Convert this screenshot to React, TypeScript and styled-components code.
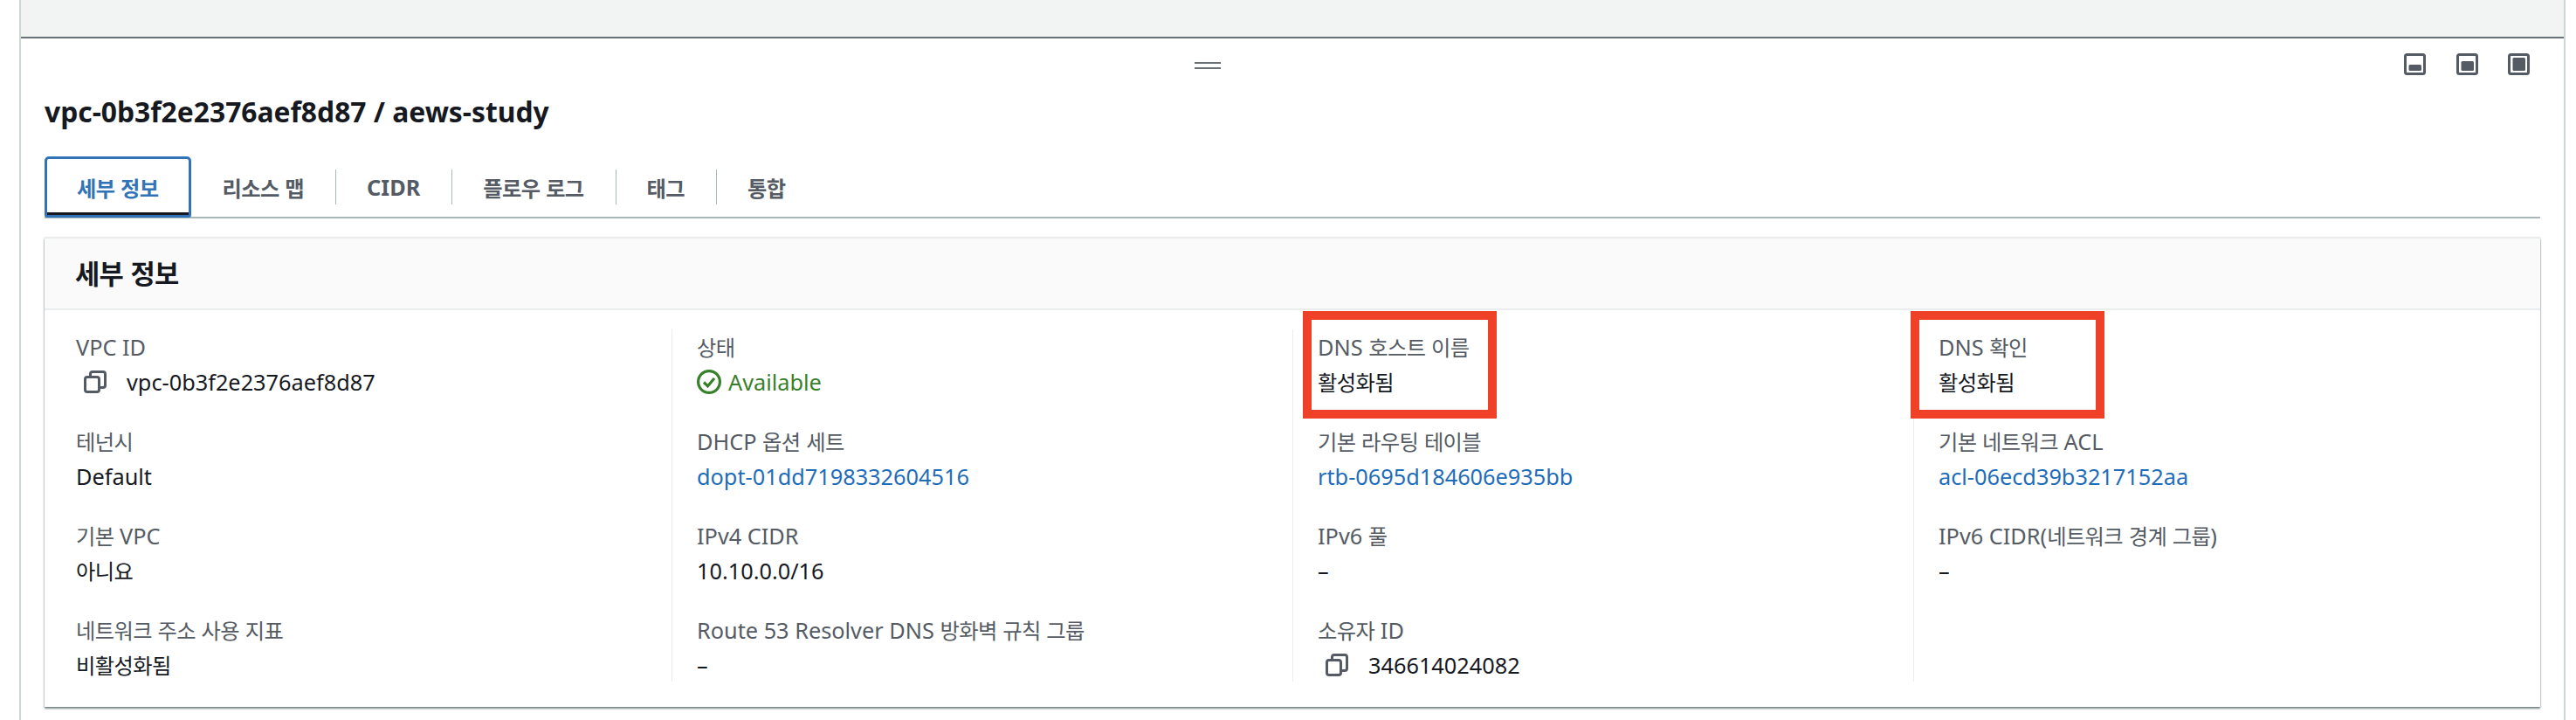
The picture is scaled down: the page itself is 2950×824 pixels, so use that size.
import styled, { createGlobalStyle } from 'styled-components';

const GlobalStyle = createGlobalStyle`
  html, body {
    margin: 0;
    padding: 0;
    background: #ffffff;
  }
  body {
    font-family: 'Noto Sans', 'Noto Sans CJK KR', sans-serif;
    width: 2950px;
    height: 824px;
    overflow: hidden;
  }
`;

type Item = {
  label: string;
  value: string;
  kind?: 'link' | 'copy' | 'status';
};

const columns: Item[][] = [
  [
    { label: 'VPC ID', value: 'vpc-0b3f2e2376aef8d87', kind: 'copy' },
    { label: '테넌시', value: 'Default' },
    { label: '기본 VPC', value: '아니요' },
    { label: '네트워크 주소 사용 지표', value: '비활성화됨' },
  ],
  [
    { label: '상태', value: 'Available', kind: 'status' },
    { label: 'DHCP 옵션 세트', value: 'dopt-01dd7198332604516', kind: 'link' },
    { label: 'IPv4 CIDR', value: '10.10.0.0/16' },
    { label: 'Route 53 Resolver DNS 방화벽 규칙 그룹', value: '–' },
  ],
  [
    { label: 'DNS 호스트 이름', value: '활성화됨' },
    { label: '기본 라우팅 테이블', value: 'rtb-0695d184606e935bb', kind: 'link' },
    { label: 'IPv6 풀', value: '–' },
    { label: '소유자 ID', value: '346614024082', kind: 'copy' },
  ],
  [
    { label: 'DNS 확인', value: '활성화됨' },
    { label: '기본 네트워크 ACL', value: 'acl-06ecd39b3217152aa', kind: 'link' },
    { label: 'IPv6 CIDR(네트워크 경계 그룹)', value: '–' },
  ],
];

const tabs = ['세부 정보', '리소스 맵', 'CIDR', '플로우 로그', '태그', '통합'];

// hangul in the shot is narrower than Noto CJK, latin is not
function Mixed({ text }: { text: string }) {
  return (
    <>
      {text.split(/([가-힣]+)/).map((part, i) =>
        i % 2 === 1 ? <Hangul key={i}>{part}</Hangul> : part
      )}
    </>
  );
}

function CopyIcon() {
  return (
    <svg width="26" height="26" viewBox="0 0 26 26" fill="none" stroke="#545b64" strokeWidth="3">
      <rect x="1.500" y="7.500" width="16" height="17" rx="2.500" />
      <path d="M7.500 6V4A2.500 2.500 0 0 1 10 1.500H22A2.500 2.500 0 0 1 24.500 4V17A2.500 2.500 0 0 1 22 19.500H18" />
    </svg>
  );
}

function StatusIcon() {
  return (
    <svg width="28" height="28" viewBox="0 0 28 28" fill="none" stroke="#37802a" strokeWidth="3.200">
      <circle cx="14" cy="14" r="12.400" />
      <path d="M8 14.500L12.500 19L20 10" />
    </svg>
  );
}

function PanelIcon({ fill }: { fill: number }) {
  return (
    <svg width="25" height="25" viewBox="0 0 25 25">
      <rect x="1.500" y="1.500" width="22" height="22" rx="2" fill="#ffffff" stroke="#545b64" strokeWidth="3" />
      <rect x="5.500" y={20 - fill} width="14.500" height={fill} rx="1.500" fill="#545b64" />
    </svg>
  );
}

function Field({ item }: { item: Item }) {
  return (
    <FieldBox>
      <Label>
        <Mixed text={item.label} />
      </Label>
      {item.kind === 'copy' ? (
        <CopyValue>
          <CopyIcon />
          <span>{item.value}</span>
        </CopyValue>
      ) : item.kind === 'status' ? (
        <StatusValue>
          <StatusIcon />
          <span>{item.value}</span>
        </StatusValue>
      ) : item.kind === 'link' ? (
        <LinkValue href="#">{item.value}</LinkValue>
      ) : (
        <Value>
          <Mixed text={item.value} />
        </Value>
      )}
    </FieldBox>
  );
}

function App() {
  return (
    <>
      <GlobalStyle />
      <Page>
        <TopStrip />
        <SplitPanel>
          <PanelBar>
            <DragHandle />
            <PanelIcons>
              <PanelIcon fill={7} />
              <PanelIcon fill={11} />
              <PanelIcon fill={15} />
            </PanelIcons>
          </PanelBar>
          <Title>vpc-0b3f2e2376aef8d87 / aews-study</Title>
          <TabList>
            {tabs.map((tab, i) => (
              <Tab key={tab} active={i === 0} divided={i >= 2}>
                <TabLabel active={i === 0}>
                  <Mixed text={tab} />
                </TabLabel>
              </Tab>
            ))}
          </TabList>
          <Card>
            <CardHeader>
              <Mixed text="세부 정보" />
            </CardHeader>
            <Columns>
              {columns.map((col, i) => (
                <Column key={i} first={i === 0}>
                  {col.map((item) => (
                    <Field key={item.label} item={item} />
                  ))}
                </Column>
              ))}
            </Columns>
            <Highlight left={1441} />
            <Highlight left={2137} />
          </Card>
        </SplitPanel>
      </Page>
    </>
  );
}

export default App;

const Hangul = styled.span`
  font-size: 0.96em;
  letter-spacing: -0.024em;
`;

const Page = styled.div`
  width: 2916px;
  height: 824px;
  margin-left: 22px;
  box-sizing: border-box;
  border-left: 2px solid #d0d5d5;
  border-right: 2px solid #d0d5d5;
  display: flex;
  flex-direction: column;
`;

const TopStrip = styled.div`
  height: 44px;
  box-sizing: border-box;
  flex: none;
  background: #f2f3f3;
  border-bottom: 2px solid #687078;
`;

const SplitPanel = styled.div`
  flex: 1;
  background: #ffffff;
  padding: 0 0 0 27px;
  display: flex;
  flex-direction: column;
`;

const PanelBar = styled.div`
  position: relative;
  height: 60px;
  flex: none;
`;

const DragHandle = styled.div`
  position: absolute;
  left: 1317px;
  top: 27px;
  width: 30px;
  height: 4px;
  border-top: 2px solid #687078;
  border-bottom: 2px solid #687078;
`;

const PanelIcons = styled.div`
  position: absolute;
  right: 39px;
  top: 17px;
  display: flex;
  gap: 34.500px;
`;

const Title = styled.h1`
  margin: 0;
  height: 48px;
  line-height: 48px;
  font-size: 31.800px;
  font-weight: 700;
  color: #16191f;
  flex: none;
`;

const TabList = styled.div`
  margin-top: 27px;
  width: 2858px;
  height: 71px;
  box-sizing: border-box;
  border-bottom: 2px solid #aab7b8;
  display: flex;
  flex: none;
`;

const Tab = styled.div<{ active: boolean; divided: boolean }>`
  position: relative;
  height: 70px;
  box-sizing: border-box;
  padding: 0 36px;
  display: flex;
  align-items: center;
  ${(p) =>
    p.active &&
    `
    padding: 0 34px;
    border: 3px solid #3273b8;
    border-radius: 5px 5px 3px 3px;
    box-shadow: inset 0 -3px 0 #16191f;
  `}
  ${(p) =>
    p.divided &&
    `
    &::before {
      content: '';
      position: absolute;
      left: 0;
      top: 15px;
      height: 40px;
      border-left: 1px solid #aab7b8;
    }
  `}
`;

const TabLabel = styled.span<{ active: boolean }>`
  font-size: 25.300px;
  font-weight: 700;
  color: ${(p) => (p.active ? '#3273b8' : '#545b64')};
`;

const Card = styled.div`
  position: relative;
  margin-top: 22px;
  width: 2858px;
  height: 537px;
  box-sizing: border-box;
  background: #ffffff;
  border-top: 1px solid #eaeded;
  box-shadow: 0 2px 2px rgba(0, 28, 36, 0.5), 0 0 2px rgba(0, 28, 36, 0.25);
  flex: none;
`;

const CardHeader = styled.div`
  height: 82px;
  box-sizing: border-box;
  padding-left: 35px;
  line-height: 80px;
  font-size: 32px;
  font-weight: 700;
  color: #16191f;
  background: #fafafa;
  border-bottom: 2px solid #eaeded;
`;

const Columns = styled.div`
  display: grid;
  grid-template-columns: repeat(4, 711px);
  padding: 22px 0 0 7px;
`;

const Column = styled.div<{ first: boolean }>`
  height: 403px;
  box-sizing: border-box;
  padding-left: 28px;
  border-left: 1px solid ${(p) => (p.first ? 'transparent' : '#eaeded')};
`;

const FieldBox = styled.div`
  height: 108px;
  padding-top: 2px;
  box-sizing: border-box;
`;

const Label = styled.div`
  height: 38px;
  line-height: 36px;
  font-size: 25.300px;
  color: #545b64;
  white-space: nowrap;
`;

const Value = styled.div`
  height: 40px;
  line-height: 40px;
  font-size: 25.300px;
  color: #16191f;
`;

const LinkValue = styled.a`
  display: block;
  height: 40px;
  line-height: 40px;
  font-size: 25.300px;
  color: #1f6db8;
  text-decoration: none;
`;

const CopyValue = styled(Value)`
  display: flex;
  align-items: center;
  gap: 23px;
  padding-left: 9px;
`;

const StatusValue = styled(Value)`
  display: flex;
  align-items: center;
  gap: 8px;
  color: #37802a;
`;

const Highlight = styled.div<{ left: number }>`
  position: absolute;
  top: 83px;
  left: ${(p) => p.left}px;
  width: 222px;
  height: 123px;
  box-sizing: border-box;
  border: 10px solid #ee4127;
`;
